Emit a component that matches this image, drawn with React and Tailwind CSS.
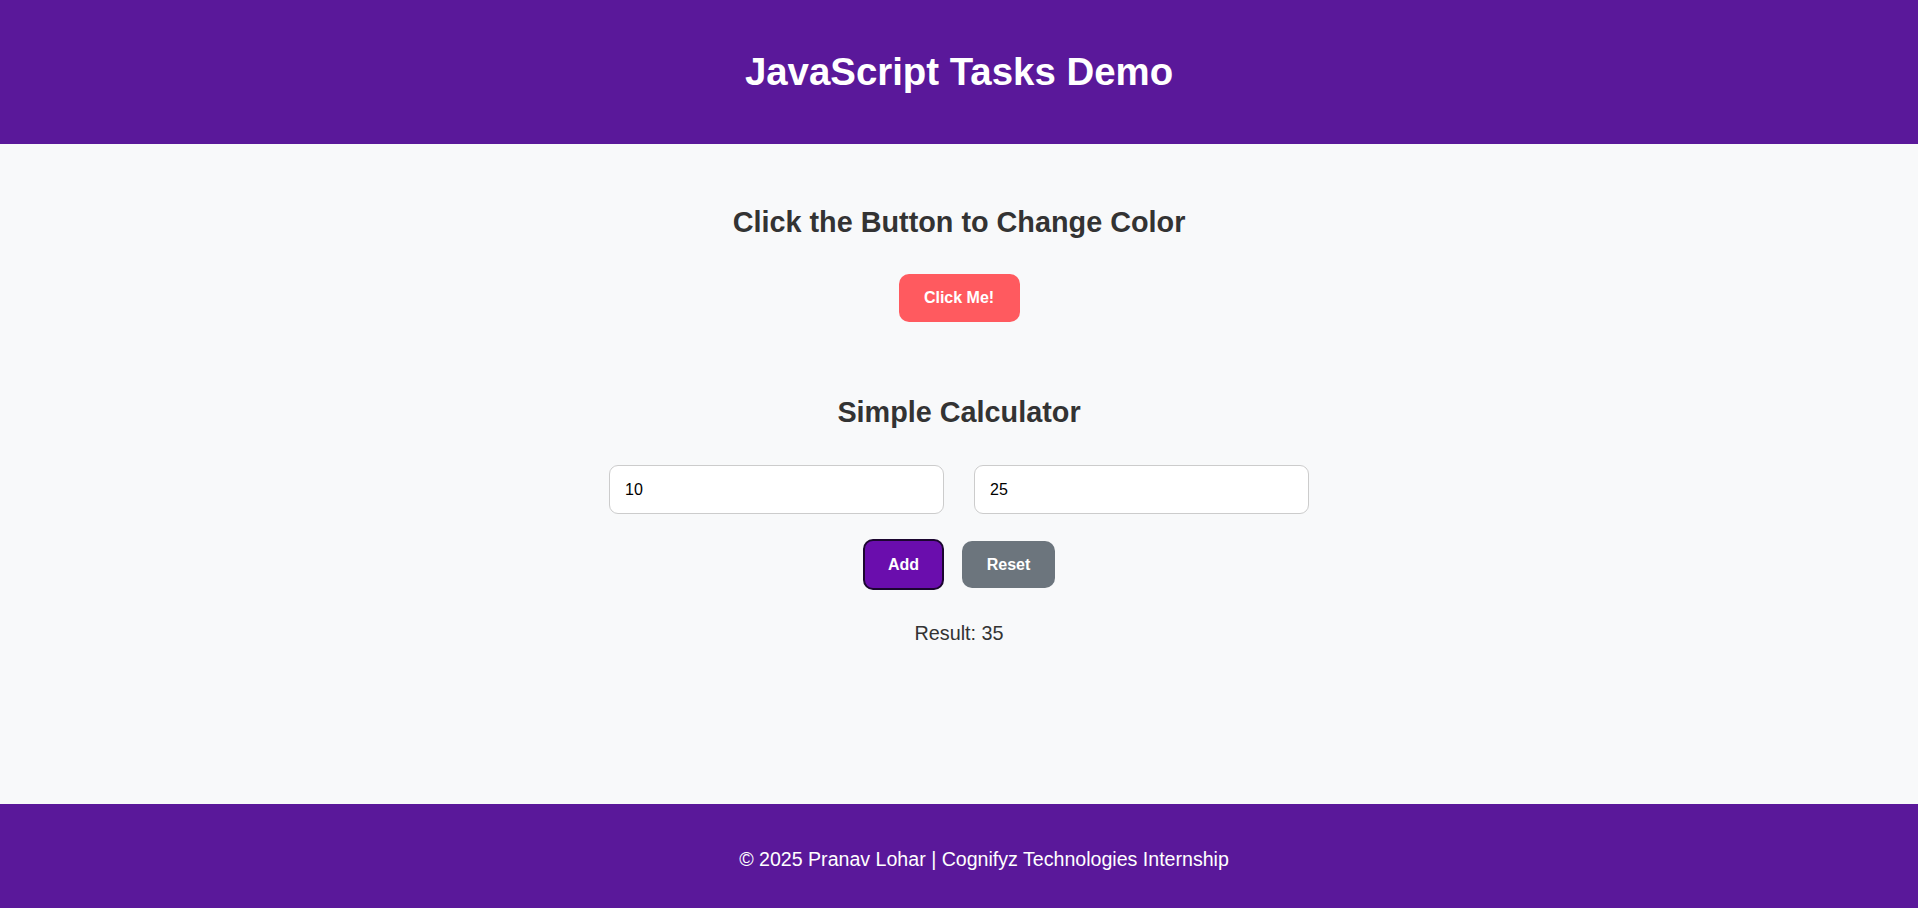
import React, { useState } from 'react';

export default function App() {
  const [a, setA] = useState('10');
  const [b, setB] = useState('25');
  const [result, setResult] = useState(35);
  const [btnColor, setBtnColor] = useState('#ff5a5f');

  const colors = ['#ff5a5f', '#2a9d8f', '#e9c46a', '#f4a261', '#6a0dad'];

  return (
    <div className="min-h-screen flex flex-col bg-[#f8f9fa] font-['Liberation_Sans',Arial,sans-serif]">
      {/* Header */}
      <header className="h-[144px] shrink-0 bg-[#5a189a] flex items-center justify-center">
        <h1 className="text-[38.4px] leading-[44px] font-bold text-white">JavaScript Tasks Demo</h1>
      </header>

      {/* Main */}
      <main className="h-[660px] shrink-0 flex flex-col items-center pt-[62px]">
        <h2 className="text-[28.8px] leading-[33px] font-bold text-[#333]">Click the Button to Change Color</h2>
        <button
          onClick={() => setBtnColor(colors[(colors.indexOf(btnColor) + 1) % colors.length])}
          style={{ backgroundColor: btnColor }}
          className="mt-[35px] w-[121px] h-[48px] rounded-[10px] text-white text-[16px] font-bold"
        >
          Click Me!
        </button>

        <h2 className="mt-[74px] text-[28.8px] leading-[33px] font-bold text-[#333]">Simple Calculator</h2>
        <div className="mt-[36px] flex gap-[30px]">
          <input
            value={a}
            onChange={e => setA(e.target.value)}
            className="w-[335px] h-[49px] rounded-[9px] border border-[#ccc] bg-white px-[15px] text-[16px] text-black outline-none"
          />
          <input
            value={b}
            onChange={e => setB(e.target.value)}
            className="w-[335px] h-[49px] rounded-[9px] border border-[#ccc] bg-white px-[15px] text-[16px] text-black outline-none"
          />
        </div>
        <div className="mt-[25px] flex items-center gap-[18px]">
          <button
            onClick={() => setResult(Number(a) + Number(b))}
            className="w-[81px] h-[51px] rounded-[10px] border-2 border-[#1c0630] bg-[#6a0dad] text-white text-[16px] font-bold"
          >
            Add
          </button>
          <button
            onClick={() => { setA(''); setB(''); setResult(''); }}
            className="w-[93px] h-[47px] rounded-[10px] bg-[#6c757d] text-white text-[16px] font-bold"
          >
            Reset
          </button>
        </div>
        <p className="mt-[32px] text-[19.8px] leading-[22px] text-[#333]">Result: {result}</p>
      </main>

      {/* Footer */}
      <footer className="h-[110px] shrink-0 bg-[#5a189a] pt-[44px] pl-[50px] text-center">
        <p className="text-[19.6px] leading-[22px] text-white">© 2025 Pranav Lohar | Cognifyz Technologies Internship</p>
      </footer>
    </div>
  );
}
